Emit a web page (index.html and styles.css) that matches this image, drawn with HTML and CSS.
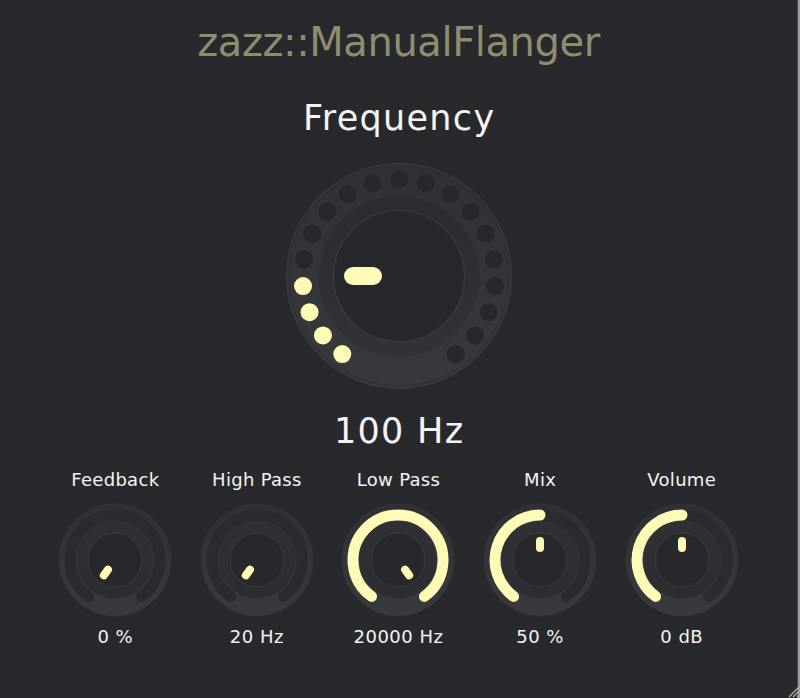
FILE: index.html
```html
<!DOCTYPE html>
<html lang="en">
<head>
  <meta charset="UTF-8">
  <title>zazz::ManualFlanger</title>
  <link rel="stylesheet" href="styles.css">
</head>
<body>

<div class="window">
  <div class="editor">
    <h1 class="title">zazz::ManualFlanger</h1>

    <!-- main frequency knob -->
    <div class="main-knob">
      <div class="main-label">Frequency</div>
      <svg class="big-knob" width="230" height="230" viewBox="0 0 230 230">
        <defs>
          <linearGradient id="outerGrad" x1="0" y1="0" x2="0" y2="1">
            <stop offset="0" stop-color="#303135"/>
            <stop offset="1" stop-color="#38393d"/>
          </linearGradient>
          <linearGradient id="midGrad" x1="0" y1="0" x2="0" y2="1">
            <stop offset="0" stop-color="#2b2c30"/>
            <stop offset="1" stop-color="#323337"/>
          </linearGradient>
        </defs>
        <circle cx="115" cy="115" r="112.5" fill="url(#outerGrad)" stroke="#3a3b3f" stroke-width="1"/>
        <circle cx="115" cy="115" r="110" fill="none" stroke="#2e2f33" stroke-width="1"/>
        <g class="dots">
          <circle class="on" cx="58.28" cy="193.07" r="9"/>
          <circle class="on" cx="38.96" cy="174.41" r="9"/>
          <circle class="on" cx="25.53" cy="151.15" r="9"/>
          <circle class="on" cx="19.03" cy="125.09" r="9"/>
          <circle cx="19.97" cy="98.24" r="9"/>
          <circle cx="28.27" cy="72.69" r="9"/>
          <circle cx="43.29" cy="50.43" r="9"/>
          <circle cx="63.86" cy="33.17" r="9"/>
          <circle cx="88.40" cy="22.24" r="9"/>
          <circle cx="115" cy="18.5" r="9"/>
          <circle cx="141.60" cy="22.24" r="9"/>
          <circle cx="166.14" cy="33.17" r="9"/>
          <circle cx="186.71" cy="50.43" r="9"/>
          <circle cx="201.73" cy="72.69" r="9"/>
          <circle cx="210.03" cy="98.24" r="9"/>
          <circle cx="210.97" cy="125.09" r="9"/>
          <circle cx="204.47" cy="151.15" r="9"/>
          <circle cx="191.04" cy="174.41" r="9"/>
          <circle cx="171.72" cy="193.07" r="9"/>
        </g>
        <circle cx="115" cy="115" r="80" fill="url(#midGrad)" stroke="#303135" stroke-width="1"/>
        <circle cx="115" cy="115" r="65.5" fill="#27282c" stroke="#3b3c40" stroke-width="1.2"/>
        <line class="pointer" x1="89" y1="115" x2="69" y2="115" stroke-width="18"/>
      </svg>
      <div class="main-value">100 Hz</div>
    </div>

    <!-- small knobs -->
    <div class="knob-row">
      <div class="knob">
        <div class="knob-label">Feedback</div>
        <svg class="small-knob" width="120" height="120" viewBox="0 0 120 120">
          <use href="#knobBase"/>
          <line class="pointer" x1="52.95" y1="69.71" x2="48.83" y2="75.37" stroke-width="8"/>
        </svg>
        <div class="knob-value">0 %</div>
      </div>
      <div class="knob">
        <div class="knob-label">High Pass</div>
        <svg class="small-knob" width="120" height="120" viewBox="0 0 120 120">
          <use href="#knobBase"/>
          <line class="pointer" x1="52.95" y1="69.71" x2="48.83" y2="75.37" stroke-width="8"/>
        </svg>
        <div class="knob-value">20 Hz</div>
      </div>
      <div class="knob">
        <div class="knob-label">Low Pass</div>
        <svg class="small-knob" width="120" height="120" viewBox="0 0 120 120">
          <use href="#knobBase"/>
          <path class="arc" d="M33.55 96.41 A45 45 0 1 1 86.45 96.41"/>
          <line class="pointer" x1="67.05" y1="69.71" x2="71.17" y2="75.37" stroke-width="8"/>
        </svg>
        <div class="knob-value">20000 Hz</div>
      </div>
      <div class="knob">
        <div class="knob-label">Mix</div>
        <svg class="small-knob" width="120" height="120" viewBox="0 0 120 120">
          <use href="#knobBase"/>
          <path class="arc" d="M33.55 96.41 A45 45 0 0 1 60 15"/>
          <line class="pointer" x1="60" y1="48" x2="60" y2="41" stroke-width="8"/>
        </svg>
        <div class="knob-value">50 %</div>
      </div>
      <div class="knob">
        <div class="knob-label">Volume</div>
        <svg class="small-knob" width="120" height="120" viewBox="0 0 120 120">
          <use href="#knobBase"/>
          <path class="arc" d="M33.55 96.41 A45 45 0 0 1 60 15"/>
          <line class="pointer" x1="60" y1="48" x2="60" y2="41" stroke-width="8"/>
        </svg>
        <div class="knob-value">0 dB</div>
      </div>
    </div>
  </div>
  <div class="edge"></div>

  <svg class="grip" width="14" height="14" viewBox="0 0 14 14">
    <path d="M13 3 L3 13 M13 7 L7 13 M13 11 L11 13" stroke="#b5b5b5" stroke-width="1.2"/>
  </svg>
</div>

<!-- shared knob body for the small knobs -->
<svg class="defs" width="0" height="0">
  <defs>
    <linearGradient id="smallOuter" x1="0" y1="0" x2="0" y2="1">
      <stop offset="0" stop-color="#2f3034"/>
      <stop offset="1" stop-color="#393a3e"/>
    </linearGradient>
    <linearGradient id="smallMid" x1="0" y1="0" x2="0" y2="1">
      <stop offset="0" stop-color="#303135"/>
      <stop offset="1" stop-color="#2c2d31"/>
    </linearGradient>
    <g id="knobBase">
      <circle cx="60" cy="60" r="56" fill="url(#smallOuter)" stroke="#34353a" stroke-width="1"/>
      <path d="M33.55 96.41 A45 45 0 1 1 86.45 96.41" fill="none" stroke="#2a2b2f" stroke-width="11" stroke-linecap="round"/>
      <circle cx="60" cy="60" r="38.5" fill="url(#smallMid)" stroke="#323337" stroke-width="1"/>
      <circle cx="60" cy="60" r="27" fill="#27282c" stroke="#393a3e" stroke-width="1"/>
    </g>
  </defs>
</svg>

</body>
</html>
```

FILE: styles.css
```css
body {
  margin: 0;
  background-color: #28292d;
  font-family: "DejaVu Sans", Verdana, sans-serif;
  color: #f4f4f4;
  overflow: hidden;
}
.window {
  position: relative;
  display: flex;
  height: 698px;
}
.editor {
  width: 797px;
  text-align: center;
}
.edge {
  width: 2px;
  background-color: #9c9c9c;
  border-left: 1px solid #4a4b4f;
}
.grip {
  position: absolute;
  right: 0;
  bottom: 0;
}
.defs {
  position: absolute;
}
.title {
  margin: 0;
  padding-top: 18px;
  font-size: 40px;
  line-height: 48px;
  font-weight: normal;
  letter-spacing: -0.4px;
  color: #8e8d6e;
}
.main-knob {
  display: flex;
  flex-direction: column;
  align-items: center;
}
.main-label,
.main-value {
  font-size: 35px;
  line-height: 40px;
  letter-spacing: 1.3px;
  padding-left: 1.3px;
}
.main-label {
  margin-top: 32px;
}
.big-knob {
  display: block;
  margin-top: 22.5px;
}
.main-value {
  margin-top: 20.5px;
}
.dots circle {
  fill: #27282b;
}
.dots circle.on {
  fill: #fdfbb5;
}
.pointer {
  stroke: #fdfbb5;
  stroke-linecap: round;
}
.arc {
  fill: none;
  stroke: #fdfbb5;
  stroke-width: 11;
  stroke-linecap: round;
}
.knob-row {
  display: grid;
  grid-template-columns: repeat(5, 1fr);
  width: 708px;
  margin: 17.5px auto 0;
}
.knob {
  display: flex;
  flex-direction: column;
  align-items: center;
}
.knob-label,
.knob-value {
  font-size: 18px;
  line-height: 22px;
}
.knob-label {
  letter-spacing: 0.3px;
}
.knob-value {
  margin-top: 6px;
  letter-spacing: 0.5px;
}
.small-knob {
  display: block;
  margin-top: 9px;
}
```
